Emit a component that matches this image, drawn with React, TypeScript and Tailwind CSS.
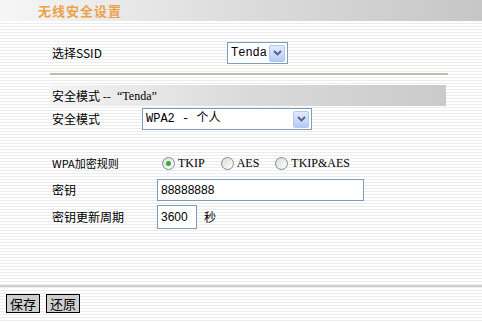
import React from "react";

const cjk = "font-['Noto_Sans_CJK_SC',sans-serif]";
const serif = "font-['Liberation_Serif','Noto_Sans_CJK_SC',serif]";
const mono = "font-['Liberation_Mono','Noto_Sans_CJK_SC',monospace]";

function Arrow() {
  return (
    <span className="flex h-[17px] w-[16px] items-center justify-center rounded-[2px] border border-[#b4c8ee] bg-gradient-to-b from-[#e2ebfd] to-[#b5cbf6]">
      <svg width="9" height="6" viewBox="0 0 9 6" fill="none">
        <path d="M1 1l3.5 3.5L8 1" stroke="#4d6185" strokeWidth="1.8" />
      </svg>
    </span>
  );
}

function Select({ label, width }: { label: string; width: string }) {
  return (
    <div
      className={`flex h-[22px] items-center justify-between border border-[#7f9db9] bg-white pl-[3px] pr-[2px] ${width}`}
    >
      <span className={`${mono} text-[12px] leading-none text-black`}>{label}</span>
      <Arrow />
    </div>
  );
}

function Radio({ checked, label }: { checked?: boolean; label: string }) {
  return (
    <label className="flex items-center gap-[3px]">
      <span className="flex h-[13px] w-[13px] items-center justify-center rounded-full border border-[#7a8c9c] bg-gradient-to-br from-[#dcdcd4] to-white">
        {checked && <span className="h-[5px] w-[5px] rounded-full bg-[#3da83d]" />}
      </span>
      <span className={`${serif} text-[12px] leading-none text-black`}>{label}</span>
    </label>
  );
}

export default function App() {
  return (
    <div
      className={`${cjk} flex h-[323px] w-[482px] flex-col overflow-hidden bg-[image:repeating-linear-gradient(to_bottom,#ffffff_0px,#ffffff_2px,#ececec_2px,#ececec_3px)] text-[12px] text-black`}
    >
      {/* title bar */}
      <div className="flex h-[21px] shrink-0 items-center bg-gradient-to-r from-[#f6f6f6] via-[#dcdcdc] to-[#c6c6c6] pl-[38px]">
        <span className="text-[13px] font-bold leading-none tracking-[1px] text-[#eba24a]">无线安全设置</span>
      </div>

      <div className="flex flex-col pl-[50px]">
        <div className="mt-[21px] flex h-[22px] items-center">
          <span className="w-[177px] pl-[2px]">选择SSID</span>
          <Select label="Tenda" width="w-[61px]" />
        </div>

        <div className="mt-[9px] h-[2px] w-[398px] bg-[#bdbdb0]" />

        <div className="mt-[10px] flex h-[21px] w-[396px] items-center bg-gradient-to-r from-[#f4f4f4] via-[#dadada] to-[#cacaca] pl-[2px]">
          <span>安全模式 --</span>
          <span className={`${serif} ml-[6px] text-[12px]`}>“Tenda”</span>
        </div>

        <div className="mt-[2px] flex h-[22px] items-center">
          <span className="w-[92px] pl-[2px]">安全模式</span>
          <Select label="WPA2 - 个人" width="w-[170px]" />
        </div>

        <div className="mt-[23px] flex h-[20px] items-center">
          <span className="w-[112px] pl-[2px] text-[11px]">WPA加密规则</span>
          <div className="flex items-center gap-[16px]">
            <Radio checked label="TKIP" />
            <Radio label="AES" />
            <Radio label="TKIP&AES" />
          </div>
        </div>

        <div className="mt-[6px] flex h-[22px] items-center">
          <span className="w-[107px] pl-[2px]">密钥</span>
          <div className="flex h-[22px] w-[207px] items-center border border-[#7f9db9] bg-white pl-[3px] font-['Liberation_Sans',sans-serif] text-[12px]">
            88888888
          </div>
        </div>

        <div className="mt-[4px] flex h-[24px] items-center">
          <span className="w-[107px] pl-[2px]">密钥更新周期</span>
          <div className="flex h-[24px] w-[40px] items-center border border-[#7f9db9] bg-white pl-[3px] font-['Liberation_Sans',sans-serif] text-[12px]">
            3600
          </div>
          <span className="ml-[7px]">秒</span>
        </div>
      </div>

      <div className="mt-[56px] h-[2px] w-full bg-[#cfcfcf]" />

      <div className="mt-[7px] flex gap-[6px] pl-[6px]">
        <button className="h-[19px] w-[34px] border border-black bg-[#cfcfcf] text-[13px] leading-none">保存</button>
        <button className="h-[19px] w-[34px] border border-black bg-[#cfcfcf] text-[13px] leading-none">还原</button>
      </div>
    </div>
  );
}
